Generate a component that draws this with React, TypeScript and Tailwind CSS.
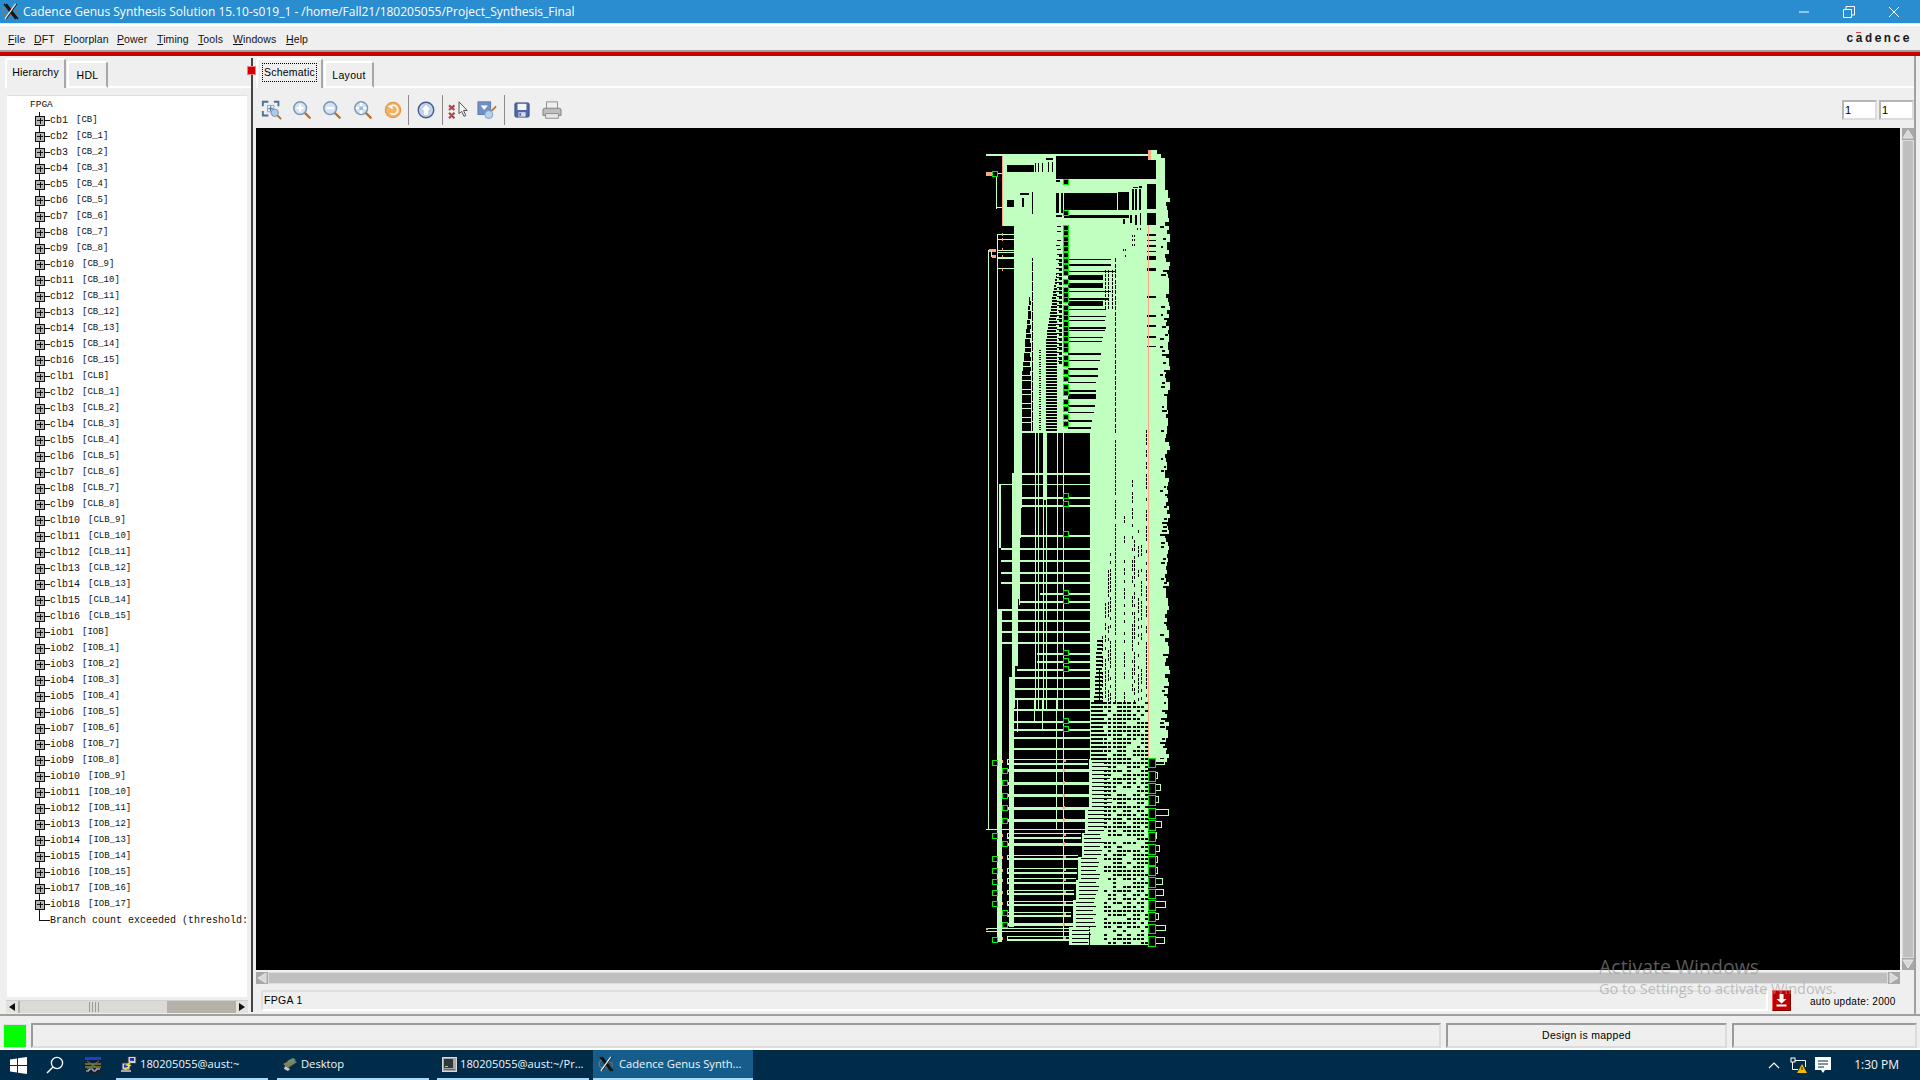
import React from "react";

type R = [number, number, number, number, string];
const G = "#c0ffc0";
const K = "#000000";
const B = "#00f000";
const S = "#ffa585";

function buildSchematic(): R[] {
  const o: R[] = [];
  let seed = 12345;
  const rnd = () => {
    seed = (seed * 1664525 + 1013904223) >>> 0;
    return seed / 4294967296;
  };
  const add = (x: number, y: number, w: number, h: number, c: string) => o.push([Math.round(x), Math.round(y), Math.max(1, Math.round(w)), Math.max(1, Math.round(h)), c]);
  const z3 = (x: number, y: number, w: number, h: number, c = K) => add(960 + x / 3, 130 + y / 3, w / 3, h / 3, c);
  const z9 = (x: number, y: number, w: number, h: number, c = K) => add(960 + x / 3, 430 + y / 3, w / 3, h / 3, c);
  const z4 = (x: number, y: number, w: number, h: number, c = K) => add(970 + x / 3, 700 + y / 3, w / 3, h / 3, c);

  // solid masses
  add(986, 154, 162, 2, G);
  add(1002, 155, 54, 71, G);
  add(1056, 179, 92, 47, G);
  add(1014, 226, 134, 248, G);
  add(1012, 473, 136, 204, G);
  add(1009, 677, 139, 60, G);
  add(1148, 150, 8, 610, G);
  add(1148, 150, 3, 10, S);
  // jagged right edge
  for (let y = 150; y < 760; y += 4) {
    const w = y < 180 ? Math.min(1165, 1157 + (y - 150) * 1) - 1156 : 1165 - 1156 + rnd() * 5;
    add(1156, y, w, 4, G);
    if (y > 225 && rnd() > 0.6) add(1160 + rnd() * 5, y, 2 + rnd() * 3, 2, K);
  }
  // top right strip holes
  z3(565, 90, 23, 58);
  z3(562, 162, 26, 75);
  z3(562, 248, 26, 37);
  for (const [y, h] of [[312, 6], [330, 3], [345, 5], [362, 3], [378, 12], [413, 10], [497, 5], [555, 5], [585, 5], [618, 5], [648, 3]]) z3(560, y, 28, h);

  // block A details
  z3(141, 105, 81, 21);
  for (const x of [225, 235, 245]) z3(x, 100, 4, 26);
  for (const x of [265, 275]) z3(x, 95, 4, 31);
  z3(258, 85, 22, 5);
  z3(141, 210, 21, 21);
  z3(186, 205, 6, 26);
  z3(216, 185, 3, 65);
  z3(180, 188, 27, 7);
  // upper black area
  z3(288, 78, 277, 70);
  z3(288, 150, 12, 5);
  z3(288, 188, 10, 60);
  z3(303, 188, 6, 60);
  z3(312, 190, 158, 50);
  z3(475, 186, 32, 54);
  for (const x of [517, 526, 537]) z3(x, 178, 6, 62);
  z3(537, 168, 10, 6);
  z3(520, 171, 14, 3);
  z3(312, 255, 195, 8);
  z3(288, 255, 18, 6);
  z3(540, 250, 3, 35);
  z3(526, 255, 6, 30);
  z3(510, 255, 6, 25);
  z3(490, 266, 6, 14);
  for (const [x, y] of [[515, 315], [522, 315], [515, 328], [522, 328], [515, 342], [522, 342], [490, 358], [495, 358], [495, 375], [530, 294], [540, 294]]) z3(x, y, 4, 5);
  for (let y = 288; y < 700; y += 14) {
    if (rnd() > 0.2) z3(288 + rnd() * 6, y, 12, 4);
    if (y > 360) z3(297, y, 10, 9);
  }

  // black stripes of the upper fan
  const st: [number, number, number][] = [[388, 3, 455], [402, 5, 455], [424, 3, 465], [435, 16, 430], [458, 16, 430], [484, 3, 455], [503, 5, 445], [514, 16, 430], [538, 3, 440], [559, 3, 440], [571, 3, 435], [590, 6, 438], [601, 3, 435], [622, 3, 430], [634, 3, 428], [668, 5, 423], [691, 3, 420], [714, 6, 416], [735, 5, 414], [757, 3, 410], [779, 5, 408], [793, 14, 408], [824, 5, 405], [847, 3, 402], [869, 5, 398], [890, 5, 393]];
  for (const [y, h, e] of st) z3(325, y, e - 325, h);
  for (const x of [435, 445, 455]) for (let y = 420; y < 540; y += 12) z3(x, y, 3, 8);
  for (let y = 385; y < 900; y += 16) z3(465, y, 3, 12);
  for (let y = 385; y < 900; y += 10) z3(216, y, 3, 8);

  // wedges, zoom 3
  for (let y = 500; y < 900; y += 14) {
    const l = y < 740 ? 208 - ((y - 500) / 240) * 22 : 185;
    z3(l, y, 212 - l, 11);
  }
  for (let y = 430; y < 900; y += 9) {
    const l = y < 630 ? 288 - ((y - 430) / 200) * 30 : 258;
    z3(l, y, 290 - l, 6);
  }
  for (let y = 660; y < 900; y += 7) {
    z3(236, y, 6, 4);
  }

  // lower black field
  for (const [a, b, l] of [[0, 225, 185], [225, 315, 183], [315, 500, 180], [500, 700, 174], [700, 840, 165]]) z9(l, a + 8, 390 - l, b - a);
  add(1014, 708, 76, 219, K);
  const hl: [number, number, number][] = [[130, 5, 156], [163, 4, 118], [200, 6, 185], [225, 6, 183], [315, 6, 180], [355, 6, 123], [390, 5, 123], [425, 5, 123], [457, 5, 123], [490, 6, 240], [514, 6, 180], [537, 5, 112], [570, 5, 126], [602, 5, 126], [635, 5, 126], [670, 6, 232], [694, 6, 232], [718, 6, 170], [740, 5, 147], [775, 5, 147], [805, 5, 147], [838, 5, 147]];
  for (const [y, h, l] of hl) z9(l, y, 390 - l, h, G);
  for (const x of [225, 235, 248, 258, 290, 310]) z9(x, 8, 3, 832, G);
  z9(248, 8, 10, 200, G);
  z9(118, 163, 5, 192, G);
  z9(112, 537, 14, 303, G);
  z9(176, 497, 4, 26, G);
  // left lines
  add(988, 250, 1, 580, G);
  add(997, 234, 1, 490, G);
  add(986, 829, 162, 1, G);
  for (const y of [312, 328, 360, 365, 380, 385, 415]) z3(112, y, 50, 2, G);
  for (const y of [312, 328, 358, 378, 416]) z3(126, y - 3, 3, 8, S);
  z3(85, 360, 5, 2, G);
  z3(87, 357, 21, 8, S);
  z3(95, 375, 13, 8, S);
  z3(93, 362, 3, 18, G);
  z3(108, 128, 4, 108, G);
  z3(108, 128, 20, 4, G);
  z3(108, 232, 20, 4, G);
  z3(78, 126, 18, 12, S);
  add(1002, 156, 1, 70, S);
  add(1148, 225, 1, 535, S);

  // bottom section
  add(1090, 737, 58, 208, G);
  add(997, 700, 5, 242, G);
  add(1009, 700, 5, 227, G);
  for (const y of [30, 62, 88, 110, 145]) z4(132, y, 230, y === 30 ? 3 : 6, G);
  z4(140, 0, 3, 95, G);
  z4(193, 0, 3, 62, G);
  z4(217, 0, 3, 88, G);
  z4(259, 0, 3, 388, G);
  z4(280, 0, 3, 710, G);
  for (const y of [210, 248, 285, 322, 358, 430, 672]) {
    z4(100, y - 2, 260, 8, G);
    z4(280, y - 4, 5, 10, S);
    z4(95, y - 3, 4, 8, S);
  }
  const dbl: [number, number][] = [[178, 355], [400, 335], [465, 325], [505, 322], [535, 318], [570, 312], [603, 310], [635, 305], [708, 297]];
  for (const [y, e] of dbl) {
    z4(112, y, e - 112, 3, G);
    z4(112, y + 10, e - 112, 7, G);
    z4(112, y, 3, 12, G);
    z4(280, y + 3, 8, 5, S);
    z4(95, y + 3, 4, 9, S);
  }
  z4(48, 685, 490, 3, G);
  z4(48, 693, 490, 3, G);
  z4(48, 684, 6, 5, S);
  const wedge = (zy: number) => (zy < 320 ? 358 : zy < 400 ? 345 : zy < 470 ? 335 : zy < 540 ? 325 : zy < 600 ? 318 : zy < 680 ? 310 : 298);
  for (let zy = 178; zy < 735; zy += 3) z4(wedge(zy), zy, 60, 3, G);
  // fan dashes bottom right: rows of bars cut by fixed vertical wires
  const segs: [number, number][] = [[402, 8], [414, 8], [428, 8], [442, 14], [460, 8], [472, 12], [488, 8], [500, 10], [514, 8], [524, 9]];
  for (let y = 702; y < 945; y += 4) {
    const zy = (y - 700) * 3;
    if (zy > 178) z4(wedge(zy) + 8, zy, 60 - rnd() * 15, 3);
    else z4(362, zy, 36 + rnd() * 6, 6);
    for (const [zx, w] of segs) if (rnd() > 0.28) z4(zx, zy, w, 6);
  }
  // dotted columns of the middle
  const cols: [number, number, number][] = [[1096, 700, 0.2], [1099, 670, 0.2], [1102, 636, 0.2], [1105, 603, 0.25], [1108, 570, 0.3], [1110, 553, 0.3], [1115, 440, 0.1], [1124, 500, 0.35], [1132, 480, 0.4], [1134, 540, 0.4], [1138, 530, 0.5], [1141, 545, 0.5], [1146, 430, 0.3]];
  for (const [x, s, p] of cols) for (let y = s; y < 702; y += 4) if (rnd() > p) add(x, y, 1, 3, K);
  for (let y = 640; y < 702; y += 4) add(1097 - (y - 640) / 22, y, 5 + (y - 640) / 20, 2, K);

  // bright pins, centre column
  const box = (x: number, y: number, w: number, h: number) => {
    add(x, y, w, h, B);
    if (w > 2 && h > 2) add(x + 1, y + 1, w - 2, h - 2, K);
  };
  const pins = [157, 248, 295, 310, 326, 342, 358, 376, 394, 412, 428, 455, 480, 495, 510, 533, 548, 565, 581, 597, 612, 628, 645, 660, 683, 703, 726, 748, 770, 788, 815, 838, 860, 882];
  for (const p of pins) box(1063, 130 + p / 3 - 3, 6, 6);
  for (const p of [197, 221, 311, 490, 514, 670, 694, 718]) box(1063, 430 + p / 3 - 3, 6, 6);
  for (const p of [64, 88]) box(1063, 700 + p / 3 - 3, 6, 6);
  box(992, 171, 6, 6);
  for (const p of [188, 408, 478, 512, 545, 580, 613, 721]) box(992, 700 + p / 3 - 3, 6, 6);
  for (const p of [214, 250, 287, 325, 363, 433, 638, 675]) box(1002, 700 + p / 3 - 3, 6, 6);

  // right hand boxes and loops
  const big: [number, number, number][] = [[175, 205, 585], [213, 245, 563], [250, 282, 572], [286, 318, 566], [325, 357, 596], [360, 392, 575], [395, 425, 560], [432, 465, 569], [467, 497, 563], [499, 530, 563], [532, 565, 578], [566, 597, 581], [600, 632, 587], [637, 668, 566], [672, 703, 587], [708, 740, 584]];
  for (const [a, b, e] of big) {
    const y0 = 700 + a / 3;
    const h = (b - a) / 3;
    z4(557, a + 2, e - 557, 3, G);
    z4(557, b - 12, e - 557, 3, G);
    z4(e - 3, a + 2, 3, b - a - 12, G);
    box(1148, y0, 8, h);
  }
  return o;
}
const rects = buildSchematic();

function Schematic() {
  return (
    <svg width={1644} height={842} viewBox="256 128 1644 842" shapeRendering="crispEdges" className="block">
      {rects.map((r, i) => (
        <rect key={i} x={r[0]} y={r[1]} width={r[2]} height={r[3]} fill={r[4]} />
      ))}
    </svg>
  );
}

function CadenceX({ size = 16 }: { size?: number }) {
  return (
    <svg width={size} height={size} viewBox="0 0 16 16" className="shrink-0">
      <circle cx="5" cy="8" r="4" fill="none" stroke="#c8622a" strokeWidth="1" />
      <circle cx="11" cy="9" r="3.4" fill="none" stroke="#b0673a" strokeWidth="0.8" />
      <path d="M2 1L13 15M4 1L15 15" stroke="#111" strokeWidth="1.5" />
      <path d="M13 1L3 15" stroke="#eee" strokeWidth="1.6" />
      <path d="M14 1L4 15" stroke="#222" strokeWidth="1" />
    </svg>
  );
}

function Mag({ children }: { children?: React.ReactNode }) {
  return (
    <svg width={20} height={20} viewBox="0 0 22 22" className="shrink-0">
      <path d="M13 13L19.5 19.5" stroke="#b5722a" strokeWidth="2.6" strokeLinecap="round" />
      <circle cx="9" cy="9" r="7" fill="#d3e2f2" stroke="#7d95b3" strokeWidth="1.6" />
      {children}
    </svg>
  );
}

function ToolIcons() {
  const sep = <div className="w-[1px] h-[30px] bg-[#8a8a8a] shrink-0" />;
  return (
    <div className="h-[40px] flex items-center pl-[6px] pt-[4px] shrink-0">
      <div className="w-[24px] flex justify-center">
        <svg width={22} height={22} viewBox="0 0 24 24">
          <path d="M2 8V3H8M14 3H19V8M2 13V18H8" fill="none" stroke="#4e6f92" strokeWidth="2" />
          <path d="M7 7H14V14H7Z" fill="#e8eef5" stroke="#8aa2bd" />
          <path d="M10.5 8V13M8 10.5H13" stroke="#5b7ea6" strokeWidth="1.5" />
          <circle cx="15" cy="15" r="4" fill="#a9cbe8" stroke="#6d8fb0" />
          <path d="M18 18L22 22" stroke="#b5722a" strokeWidth="2" />
        </svg>
      </div>
      <div className="w-[6px]" />
      <div className="w-[24px] flex justify-center">
        <Mag><path d="M9 5V13M5 9H13" stroke="#fff" strokeWidth="2.4" /></Mag>
      </div>
      <div className="w-[6px]" />
      <div className="w-[24px] flex justify-center">
        <Mag><path d="M5 9H13" stroke="#fff" strokeWidth="2.4" /></Mag>
      </div>
      <div className="w-[7px]" />
      <div className="w-[24px] flex justify-center">
        <Mag><path d="M9 3V15M3 9H15" stroke="#fff" strokeWidth="2" /><circle cx="9" cy="9" r="2.2" fill="#9fb8d2" /></Mag>
      </div>
      <div className="w-[6px]" />
      <div className="w-[24px] flex justify-center">
        <svg width={18} height={18} viewBox="0 0 20 20">
          <circle cx="10" cy="10" r="8.5" fill="#f3b264" stroke="#e49a45" strokeWidth="1.4" />
          <path d="M6.5 6.5A5 5 0 1 1 7 13.5" fill="none" stroke="#fff" strokeWidth="1.8" />
          <path d="M4 5.5L9.5 5V9.5Z" fill="#fff" />
        </svg>
      </div>
      <div className="w-[3px]" />
      {sep}
      <div className="w-[5px]" />
      <div className="w-[24px] flex justify-center">
        <svg width={18} height={18} viewBox="0 0 20 20">
          <circle cx="10" cy="10" r="8.6" fill="#c5d5ea" stroke="#425d91" strokeWidth="1.6" />
          <path d="M10 3.5L16 10H13V16H7V10H4Z" fill="#fff" stroke="#9db0cc" strokeWidth="0.6" />
        </svg>
      </div>
      <div className="w-[4px]" />
      {sep}
      <div className="w-[4px]" />
      <div className="w-[24px] flex justify-center">
        <svg width={22} height={20} viewBox="0 0 24 22">
          <path d="M1 6L7 11M7 6L1 11M1 14L7 20M7 14L1 20" stroke="#b54545" strokeWidth="2.4" />
          <path d="M12 2V15L15 12.5L17.5 18L19.5 17L17 11.5H21Z" fill="#f6f6f6" stroke="#444" strokeWidth="1" />
        </svg>
      </div>
      <div className="w-[4px]" />
      <div className="w-[24px] flex justify-center">
        <svg width={20} height={20} viewBox="0 0 22 22">
          <rect x="1" y="2" width="14" height="14" fill="#6f90c4" stroke="#5a7ab0" />
          <path d="M4 6H12L8 11Z" fill="#ffffff" />
          <circle cx="13" cy="16" r="4.4" fill="#b7d1ea" stroke="#7d9bbd" />
          <path d="M16 12L21 7" stroke="#b5722a" strokeWidth="2" />
        </svg>
      </div>
      <div className="w-[5px]" />
      {sep}
      <div className="w-[5px]" />
      <div className="w-[24px] flex justify-center">
        <svg width={16} height={16} viewBox="0 0 18 18">
          <rect x="1" y="1" width="16" height="16" rx="1.5" fill="#5068a8" stroke="#354a85" />
          <rect x="4" y="2" width="10" height="7" fill="#f2f4f8" />
          <rect x="5" y="11.5" width="8" height="5" fill="#d8dee8" />
          <rect x="6" y="12.5" width="2" height="3" fill="#5068a8" />
        </svg>
      </div>
      <div className="w-[6px]" />
      <div className="w-[24px] flex justify-center">
        <svg width={20} height={19} viewBox="0 0 22 21">
          <rect x="5" y="1" width="12" height="8" fill="#f0f0f0" stroke="#8a8a8a" />
          <path d="M1 10Q1 8 3 8H19Q21 8 21 10V16H1Z" fill="#bdbdbd" stroke="#7d7d7d" />
          <rect x="4" y="14" width="14" height="5" fill="#e8e8e8" stroke="#8a8a8a" />
        </svg>
      </div>
      <div className="flex-1" />
      <div className="flex gap-[2px] pr-[0px]">
        {[0, 1].map((i) => (
          <div key={i} className="w-[35px] h-[20px] bg-white border-2 border-t-[#b5b5b5] border-l-[#b5b5b5] border-r-[#dcdcdc] border-b-[#dcdcdc] text-[11px] leading-[16px] pl-[1px] text-black [font-family:'Liberation_Sans',sans-serif]">1</div>
        ))}
      </div>
    </div>
  );
}

function TreeRow({ name, type }: { name: string; type: string }) {
  return (
    <div className="h-[16px] flex items-center whitespace-nowrap">
      <svg width={15} height={16} viewBox="0 0 15 16" className="shrink-0">
        <path d="M4.5 0V16M8 8.5H15" stroke="#111" strokeWidth="1" shapeRendering="crispEdges" />
        <rect x="0.5" y="4" width="9" height="9" fill="#b4b4b4" stroke="#111" shapeRendering="crispEdges" />
        <path d="M2 8.5H8M5 5.5V11.5" stroke="#111" strokeWidth="1" shapeRendering="crispEdges" />
      </svg>
      <span className="text-[10px]">{name}</span>
      <span className="text-[9px] ml-[8px] pt-[1px]">[{type}]</span>
    </div>
  );
}

const groups: [string, string, number][] = [["cb", "CB", 16], ["clb", "CLB", 16], ["iob", "IOB", 18]];
const treeRows = groups.flatMap(([n, t, c]) => Array.from({ length: c }, (_, i) => ({ name: `${n}${i + 1}`, type: i === 0 ? t : `${t}_${i}` })));

function Tab({ label, active, focus, w, ml = 0 }: { label: string; active?: boolean; focus?: boolean; w: number; ml?: number }) {
  return (
    <div
      style={{ width: w, marginLeft: ml }}
      className={
        active
          ? "h-[30px] bg-[#efefef] border-l-2 border-t-2 border-white border-r-2 border-r-[#a8a8a8] rounded-tl-[3px] rounded-tr-[3px] flex items-start pt-[3px] justify-center text-[10.5px] tracking-[0.2px] shrink-0"
          : "h-[27px] bg-[#efefef] border-l-2 border-t-2 border-white border-r-2 border-r-[#a8a8a8] border-b-2 border-b-white rounded-tl-[3px] rounded-tr-[3px] flex items-start pt-[5px] justify-center text-[10.5px] tracking-[0.3px] shrink-0"
      }
    >
      <span className={focus ? "border border-dotted border-black px-[1px] h-[19px] leading-[17px]" : active ? "leading-[19px]" : ""}>{label}</span>
    </div>
  );
}

function TabRow({ pl, children }: { pl: number; children: React.ReactNode }) {
  return (
    <div style={{ paddingLeft: pl }} className="h-[32px] shrink-0 flex items-end">
      {children}
      <div className="flex-1 h-[2px] bg-white" />
    </div>
  );
}

function Arrow({ dir }: { dir: "l" | "r" | "u" | "d" }) {
  const p = { l: "M10 1V11L2 6Z", r: "M2 1V11L10 6Z", u: "M1 10H11L6 2Z", d: "M1 2H11L6 10Z" }[dir];
  return (
    <svg width={12} height={12} viewBox="0 0 12 12" className="shrink-0 bg-[#a8a8a8]">
      <path d={p} fill="#d8d8d8" stroke="#eeeeee" strokeWidth="0.8" />
    </svg>
  );
}

function Field({ className = "", children }: { className?: string; children?: React.ReactNode }) {
  return (
    <div className={"h-[25px] border-2 border-t-[#9a9a9a] border-l-[#9a9a9a] border-r-[#dcdcdc] border-b-[#dcdcdc] bg-[#efefef] flex items-center justify-center text-[10.5px] tracking-[0.3px] text-black " + className}>
      {children}
    </div>
  );
}

function TaskItem({ w, ml, icon, label, active, gap = 4 }: { w: number; ml: number; icon: React.ReactNode; label: string; active?: boolean; gap?: number }) {
  return (
    <div
      style={{ width: w, marginLeft: ml, gap }}
      className={"h-[30px] flex items-center pl-[5px] border-b-2 border-[#a6dcf5] text-[#f2f6f9] text-[11.2px] whitespace-nowrap overflow-hidden [font-family:'Open_Sans',sans-serif] " + (active ? "bg-[#155e8c]" : "")}
    >
      {icon}
      <span>{label}</span>
    </div>
  );
}

export default function App() {
  return (
    <div className="relative w-[1920px] h-[1080px] overflow-hidden flex flex-col bg-[#efefef] text-black [font-family:'Liberation_Sans',sans-serif]">
      {/* title bar */}
      <div className="h-[24px] shrink-0 bg-[#2a8dd0] flex items-center pl-[2px] border-b border-[#d8e8f2]">
        <CadenceX size={17} />
        <span className="ml-[4px] text-white text-[12px] [font-family:'Open_Sans',sans-serif] whitespace-nowrap">Cadence Genus Synthesis Solution 15.10-s019_1 - /home/Fall21/180205055/Project_Synthesis_Final</span>
        <div className="flex-1" />
        <svg width={12} height={12} viewBox="0 0 12 12" className="mr-[33px]"><path d="M1 6H11" stroke="#fff" /></svg>
        <svg width={12} height={12} viewBox="0 0 12 12" className="mr-[33px]"><path d="M0.5 3.5H8.5V11.5H0.5ZM3 3V0.5H11.5V9H9" fill="none" stroke="#fff" /></svg>
        <svg width={12} height={12} viewBox="0 0 12 12" className="mr-[20px]"><path d="M1 1L11 11M11 1L1 11" stroke="#fff" /></svg>
      </div>
      {/* menu */}
      <div className="h-[26px] shrink-0 bg-[#efefef] border-t-2 border-white flex items-center pt-[3px] text-[10.5px] tracking-[0.1px] text-[#111] pl-[8px]">
        {[["File", 26], ["DFT", 30], ["Floorplan", 53], ["Power", 40], ["Timing", 41], ["Tools", 35], ["Windows", 53], ["Help", 30]].map(([m, w]) => (
          <span key={m as string} style={{ width: w as number }} className="whitespace-nowrap">
            <span className="underline">{(m as string)[0]}</span>
            {(m as string).slice(1)}
          </span>
        ))}
        <div className="flex-1" />
        <div className="mr-[8px] -mt-[2px] relative text-[12px] leading-[14px] tracking-[2.2px] text-[#1a1a1a] [font-family:'Liberation_Mono',monospace] font-bold">
          cadence
          <span className="absolute left-[10px] top-[0px] w-[5px] h-[1px] bg-[#e04040]" />
        </div>
      </div>
      <div className="h-[2px] shrink-0 bg-[#a0a0a0]" />
      <div className="h-[4px] shrink-0 bg-[#c80000]" />

      {/* main */}
      <div className="h-[960px] shrink-0 flex border-b-2 border-[#a0a0a0] relative">
        {/* left panel */}
        <div className="w-[251px] shrink-0 flex flex-col">
          <TabRow pl={5}>
            <Tab label="Hierarchy" active w={61} />
            <Tab label="HDL" w={41} ml={1} />
          </TabRow>
          <div className="h-[7px] shrink-0" />
          <div className="ml-[7px] w-[240px] h-[902px] bg-white border-t border-[#e0e0e0] overflow-hidden [font-family:'Liberation_Mono',monospace] text-[#111] pl-[28px]">
            <div className="h-[16px] flex items-center text-[9.5px] -ml-[5px] pt-[2px]">FPGA</div>
            {treeRows.map((r) => (
              <TreeRow key={r.name} name={r.name} type={r.type} />
            ))}
            <div className="h-[16px] flex items-center whitespace-nowrap text-[10px]">
              <svg width={15} height={16} viewBox="0 0 15 16" className="shrink-0">
                <path d="M4.5 0V8.5H15" stroke="#111" fill="none" shapeRendering="crispEdges" />
              </svg>
              Branch count exceeded (threshold:
            </div>
          </div>
          <div className="h-[3px] shrink-0" />
          <div className="ml-[6px] w-[242px] h-[13px] flex items-center bg-[#b5b1a8] border-t border-[#cfcfcf]">
            <div className="w-[12px] h-[12px] bg-[#e4e2dd] flex items-center justify-center">
              <svg width={6} height={8} viewBox="0 0 6 8"><path d="M6 0V8L0 4Z" fill="#111" /></svg>
            </div>
            <div className="ml-[2px] w-[147px] h-[12px] bg-[#dcdad5] flex items-center justify-center gap-[1px] pl-[2px]">
              {[0, 1, 2, 3].map((i) => <div key={i} className="w-[1px] h-[10px] bg-[#9c9a94] mr-[1px]" />)}
            </div>
            <div className="flex-1" />
            <div className="w-[12px] h-[12px] bg-[#e4e2dd] flex items-center justify-center">
              <svg width={6} height={8} viewBox="0 0 6 8"><path d="M0 0V8L6 4Z" fill="#111" /></svg>
            </div>
          </div>
        </div>
        {/* splitter */}
        <div className="w-[2px] shrink-0 bg-[#444444] mt-[2px] mb-[2px]" />
        <div className="absolute left-[247px] top-[10px] w-[9px] h-[9px] bg-[#d40000] border border-[#f08080]" />
        {/* right panel */}
        <div className="w-[1662px] ml-[1px] shrink-0 flex flex-col border-r-2 border-[#a0a0a0]">
          <TabRow pl={2}>
            <Tab label="Schematic" active focus w={67} />
            <Tab label="Layout" w={50} ml={1} />
          </TabRow>
          <ToolIcons />
          <div className="flex h-[842px] shrink-0 pl-[2px]">
            <div className="w-[1644px] h-[842px] bg-black shrink-0 overflow-hidden">
              <Schematic />
            </div>
            <div className="ml-[2px] w-[12px] h-[842px] flex flex-col bg-[#bcbcbc]">
              <Arrow dir="u" />
              <div className="flex-1 border border-[#dcdcdc] bg-[#bfbfbf]" />
              <Arrow dir="d" />
            </div>
          </div>
          <div className="ml-[2px] mt-[2px] w-[1644px] h-[12px] flex bg-[#bcbcbc] shrink-0">
            <Arrow dir="l" />
            <div className="flex-1 border border-[#dcdcdc] bg-[#bfbfbf]" />
            <Arrow dir="r" />
          </div>
          <div className="flex-1 flex items-center pl-[7px] pt-[2px] text-[10.5px] tracking-[0.3px]">
            <div className="w-[1507px] h-[21px] border-2 border-t-[#e0e0e0] border-l-[#e0e0e0] border-r-[#ffffff] border-b-[#ffffff] bg-[#efefef] flex items-center pl-[1px] pt-[2px]">FPGA 1</div>
            <div className="w-[19px] h-[21px] ml-[4px] bg-[#c00000] border border-t-[#e86060] border-l-[#e86060] border-r-[#800000] border-b-[#800000] flex items-center justify-center">
              <svg width={13} height={15} viewBox="0 0 13 15">
                <path d="M4.5 1H8.5V6H11.5L6.5 10.5L1.5 6H4.5Z" fill="#fff" />
                <path d="M1.5 12.5H11.5" stroke="#fff" strokeWidth="2" />
              </svg>
            </div>
            <span className="ml-[19px] pt-[3px] whitespace-nowrap text-[10px] tracking-[0.3px]">auto update: 2000</span>
          </div>
        </div>
      </div>

      {/* status row */}
      <div className="h-[34px] shrink-0 flex items-start pt-[7px] border-b-2 border-white">
        <div className="ml-[3px] mt-[1px] w-[24px] h-[24px] bg-[#00ff00] border border-[#e0e0e0]" />
        <Field className="ml-[4px] w-[1410px]" />
        <Field className="ml-[5px] w-[281px]">Design is mapped</Field>
        <Field className="ml-[5px] w-[185px]" />
      </div>

      {/* taskbar */}
      <div className="h-[30px] shrink-0 bg-[#002c4a] flex items-center relative">
        <svg width={17} height={17} viewBox="0 0 17 17" className="ml-[10px] shrink-0">
          <path d="M0 2.4L7 1.4V8H0ZM8 1.2L17 0V8H8ZM0 9H7V15.6L0 14.6ZM8 9H17V17L8 15.8Z" fill="#fff" />
        </svg>
        <svg width={18} height={18} viewBox="0 0 18 18" className="ml-[19px] shrink-0">
          <circle cx="11" cy="7" r="5.6" fill="none" stroke="#fff" strokeWidth="1.3" />
          <path d="M7 11L1 17" stroke="#fff" strokeWidth="1.5" />
        </svg>
        <svg width={16} height={16} viewBox="0 0 16 16" className="ml-[21px] shrink-0">
          <rect width="16" height="16" fill="#14202c" />
          <rect width="16" height="3" fill="#1d3fd0" />
          <path d="M0 7H16M0 10H16" stroke="#c9a93c" />
          <path d="M2 4L14 12M14 4L2 12" stroke="#4c8a54" />
          <path d="M1 14H4V12H8V14H11V12H15" stroke="#d0d0d0" fill="none" />
        </svg>
        <TaskItem
          ml={15}
          w={152}
          gap={3}
          label="180205055@aust:~"
          icon={
            <svg width={16} height={16} viewBox="0 0 16 16" className="shrink-0">
              <rect x="7" y="0.5" width="8" height="7" fill="#cfd6e2" stroke="#333" />
              <rect x="9" y="2" width="4" height="3" fill="#2030b0" />
              <rect x="1" y="7" width="8" height="7" fill="#cfd6e2" stroke="#333" />
              <rect x="3" y="8.5" width="4" height="3" fill="#2030b0" />
              <path d="M11 5L6 9L9 9.5L4 14" stroke="#f0e020" strokeWidth="1.5" fill="none" />
              <rect x="0" y="14" width="10" height="2" fill="#a8a8a8" />
            </svg>
          }
        />
        <TaskItem
          ml={9}
          w={152}
          gap={3}
          label="Desktop"
          icon={
            <svg width={16} height={16} viewBox="0 0 16 16" className="shrink-0">
              <path d="M1 8L10 3L15 6L6 12Z" fill="#8a7a56" />
              <path d="M5 5L11 2L14 4L8 7Z" fill="#5a9a7a" />
              <path d="M3 10L8 13L6 15L2 13Z" fill="#c8c8c8" />
            </svg>
          }
        />
        <TaskItem
          ml={8}
          w={152}
          gap={3}
          label="180205055@aust:~/Pr..."
          icon={
            <svg width={15} height={15} viewBox="0 0 15 15" className="shrink-0">
              <rect x="0.5" y="0.5" width="14" height="14" fill="#a8a8a8" stroke="#d8d8d8" />
              <rect x="2" y="2" width="9" height="9" fill="#2e3a3a" />
              <rect x="3" y="9" width="3" height="1" fill="#9ad09a" />
              <rect x="2" y="12" width="11" height="1" fill="#666" />
            </svg>
          }
        />
        <TaskItem ml={4} w={160} gap={5} active label="Cadence Genus Synth..." icon={<CadenceX size={16} />} />
        <div className="flex-1" />
        <svg width={12} height={8} viewBox="0 0 12 8" className="shrink-0"><path d="M1 7L6 2L11 7" fill="none" stroke="#fff" strokeWidth="1.2" /></svg>
        <svg width={17} height={17} viewBox="0 0 17 17" className="ml-[10px] shrink-0">
          <path d="M2.5 3.5H15.5V10M2.5 3.5V12.5H8" fill="none" stroke="#fff" />
          <rect x="1" y="1" width="4" height="4" fill="#002c4a" stroke="#fff" />
          <path d="M12 7L17 16H7Z" fill="#f5b800" />
          <path d="M12 10V13" stroke="#222" />
        </svg>
        <svg width={16} height={17} viewBox="0 0 16 17" className="ml-[8px] shrink-0">
          <path d="M0 0H16V13H10L8 16L6 13H0Z" fill="#fff" />
          <path d="M3 4H13M3 7H13M3 10H9" stroke="#002c4a" />
        </svg>
        <span className="ml-[23px] mr-[21px] text-[12px] text-[#f2f6f9] [font-family:'Open_Sans',sans-serif] whitespace-nowrap">1:30 PM</span>
      </div>

      {/* watermark */}
      <div className="absolute left-[1599px] top-[953px] text-[19.5px] leading-[28px] text-[#999999]/60 [font-family:'Open_Sans',sans-serif] whitespace-nowrap">Activate Windows</div>
      <div className="absolute left-[1599px] top-[979px] text-[14.5px] leading-[20px] text-[#999999]/60 [font-family:'Open_Sans',sans-serif] whitespace-nowrap">Go to Settings to activate Windows.</div>
    </div>
  );
}
